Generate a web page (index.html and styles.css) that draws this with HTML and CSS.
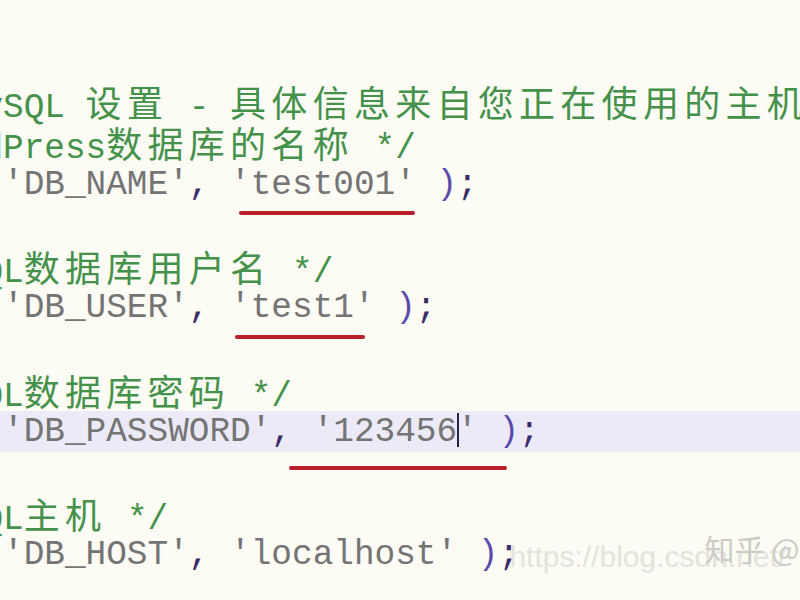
FILE: index.html
```html
<!DOCTYPE html>
<html lang="zh-CN">
<head>
<meta charset="utf-8">
<title>wp-config.php</title>
<link rel="stylesheet" href="styles.css">
</head>
<body>
<div class="editor">
  <div class="line"></div>
  <div class="line"><span class="c">ySQL <span class="zh">设置</span> - <span class="zh">具体信息来自您正在使用的主机</span>*/</span></div>
  <div class="line"><span class="c">dPress<span class="zh">数据库的名称</span> */</span></div>
  <div class="line code"> <span class="s">'DB_NAME'</span><span class="p">,</span> <span class="s">'test001'</span> <span class="b">)</span><span class="p">;</span><span class="mark mark-name"></span></div>
  <div class="line"></div>
  <div class="line"><span class="c">QL<span class="zh">数据库用户名</span> */</span></div>
  <div class="line code"> <span class="s">'DB_USER'</span><span class="p">,</span> <span class="s">'test1'</span> <span class="b">)</span><span class="p">;</span><span class="mark mark-user"></span></div>
  <div class="line"></div>
  <div class="line"><span class="c">QL<span class="zh">数据库密码</span> */</span></div>
  <div class="line code current"> <span class="s">'DB_PASSWORD'</span><span class="p">,</span> <span class="s">'123456<span class="caret"></span>'</span> <span class="b">)</span><span class="p">;</span><span class="mark mark-pass"></span></div>
  <div class="line"></div>
  <div class="line"><span class="c">QL<span class="zh">主机</span> */</span></div>
  <div class="line code"> <span class="s">'DB_HOST'</span><span class="p">,</span> <span class="s">'localhost'</span> <span class="b">)</span><span class="p">;</span><span class="wm-url">https://blog.csdn.net/</span><span class="wm-zh">知乎 @</span></div>
</div>
</body>
</html>
```

FILE: styles.css
```css
html, body {
  margin: 0;
  padding: 0;
  width: 800px;
  height: 600px;
  overflow: hidden;
  background: #fcfbf4;
}

.editor {
  margin-left: -17.6px;
  padding-top: 40px;
  font-family: "Liberation Mono", "Noto Sans CJK SC", monospace;
  font-size: 34.4px;
  color: #747474;
}

.line {
  position: relative;
  height: 41.2px;
  line-height: 41.2px;
  white-space: pre;
}

.current {
  background: #eceaf7;
}

.c {
  color: #44914a;
}

.zh {
  font-family: "Noto Sans CJK SC", sans-serif;
  font-size: 36px;
  letter-spacing: 5.28px;
  color: #44914a;
}

.s {
  color: #747474;
}

.p {
  color: #3a2c66;
}

.b {
  color: #5a4bab;
}

.caret {
  display: inline-block;
  width: 2px;
  height: 34px;
  margin-right: -2px;
  vertical-align: -6px;
  background: #23234a;
}

.mark {
  position: absolute;
  height: 4px;
  border-radius: 2px;
  background: #b8202a;
}

.mark-name {
  left: 257px;
  width: 176px;
  top: 47px;
}

.mark-user {
  left: 253px;
  width: 130px;
  top: 48px;
}

.mark-pass {
  left: 307px;
  width: 218px;
  top: 55px;
}

.wm-url {
  position: absolute;
  left: 527px;
  top: 2px;
  font-family: "Liberation Sans", sans-serif;
  font-size: 30px;
  color: #e4e3de;
}

.wm-zh {
  position: absolute;
  left: 722px;
  top: -6px;
  font-family: "Noto Sans CJK SC", sans-serif;
  font-size: 30px;
  color: #cccbc6;
}
```
